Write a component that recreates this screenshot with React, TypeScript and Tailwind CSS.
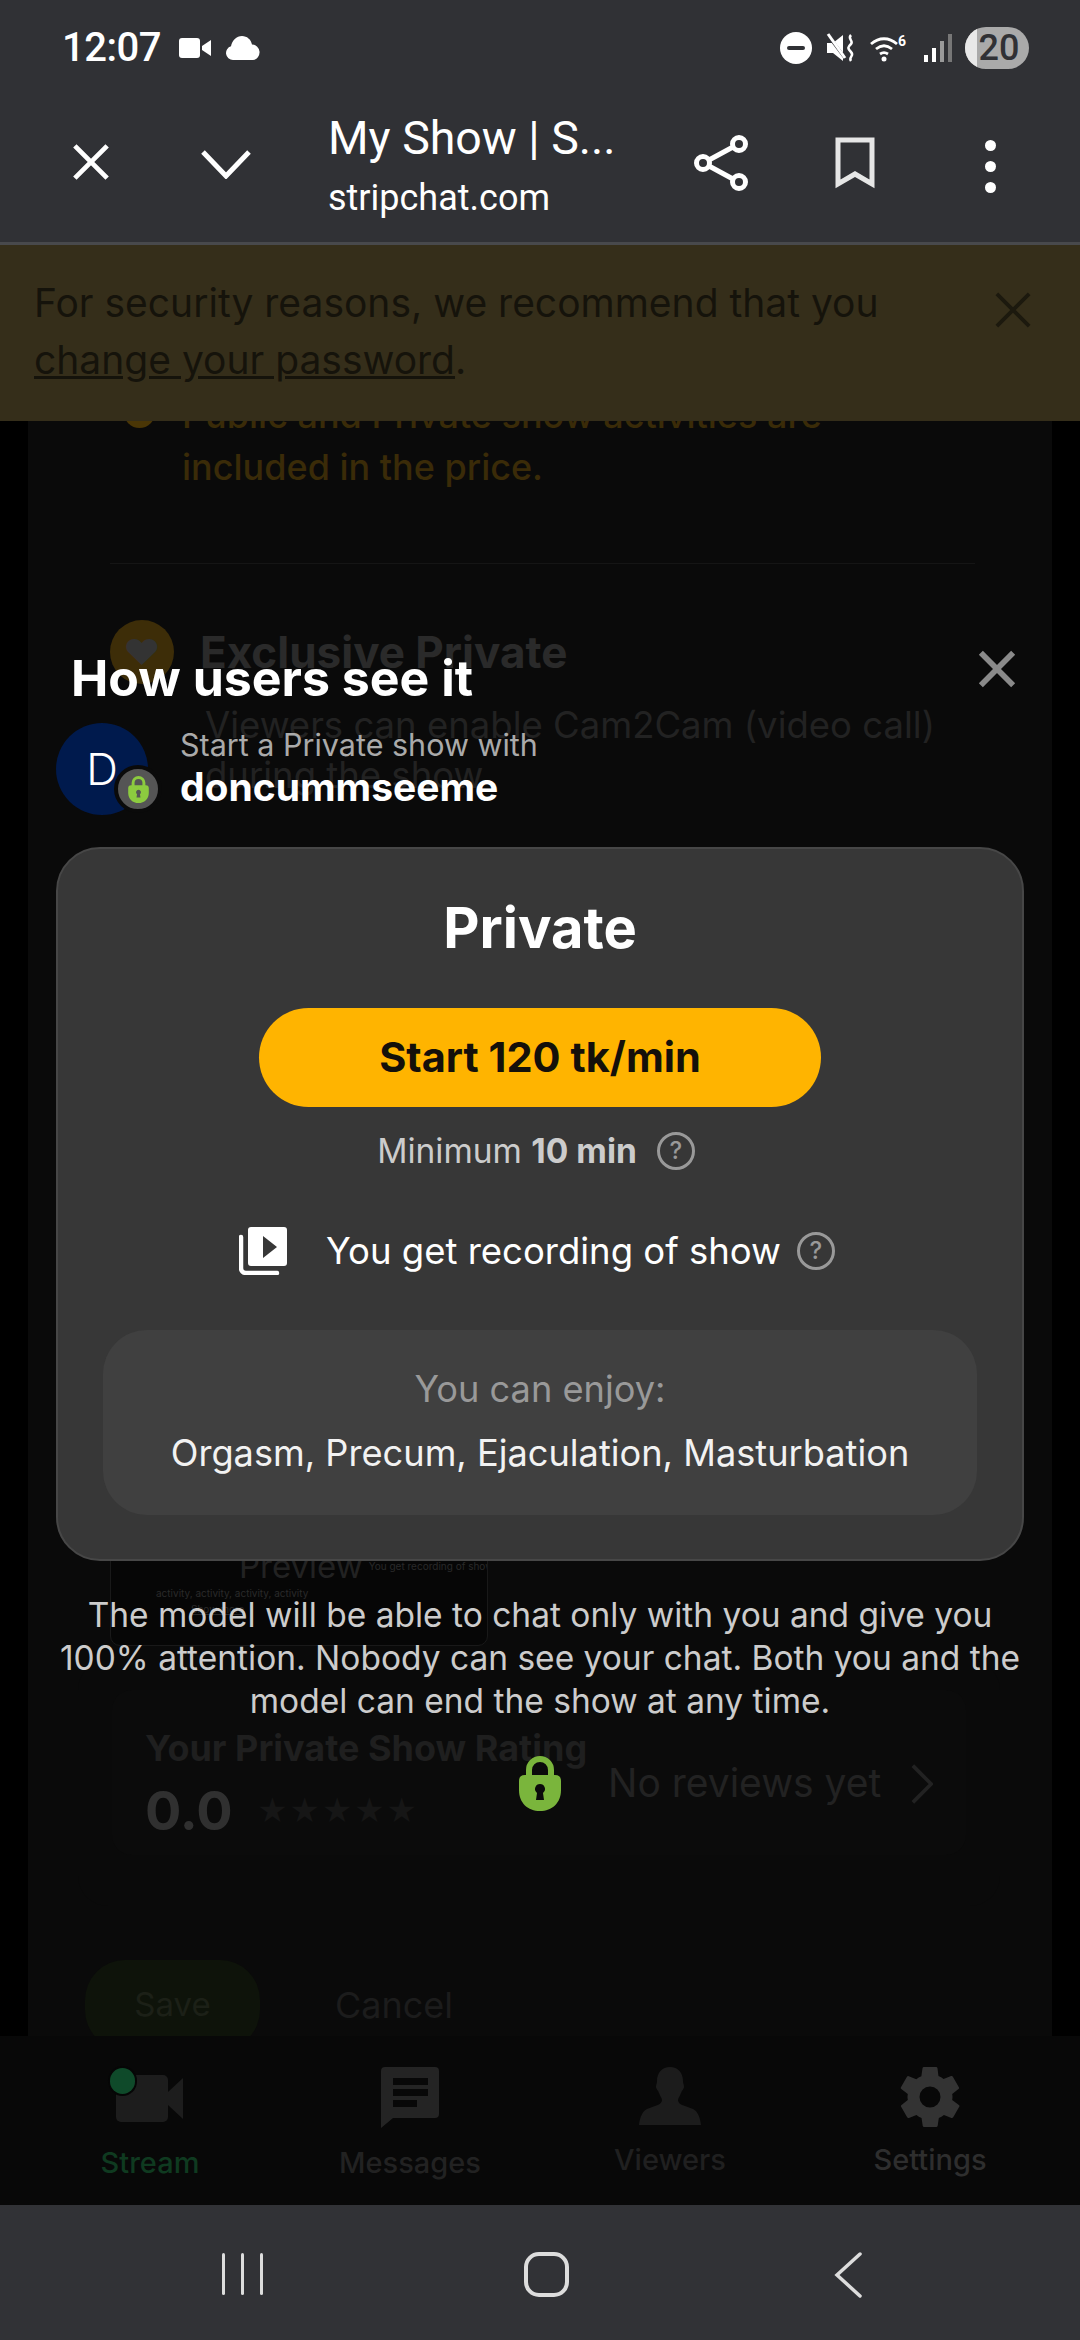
import React from 'react';

const inter = { fontFamily: '"Inter", "Liberation Sans", sans-serif' };
const roboto = { fontFamily: 'Roboto, sans-serif' };

const LockIcon = ({ className }: { className: string }) => (
  <svg viewBox="0 0 42 55" className={className} fill="currentColor">
    <path d="M10 22V14a11 11 0 0 1 22 0v8" fill="none" stroke="currentColor" strokeWidth="6" />
    <path
      fillRule="evenodd"
      d="M6 19h30c4 0 6 2 6 6v9c0 13-9 21-21 21S0 47 0 34v-9c0-4 2-6 6-6zm15 9a5 5 0 0 0-3 9l-1 7h8l-1-7a5 5 0 0 0-3-9z"
    />
  </svg>
);

const HelpCircle = ({ className }: { className: string }) => (
  <span className={`flex items-center justify-center rounded-full border-[3px] border-[#999] text-[#999] font-medium ${className}`}>?</span>
);

const XIcon = ({ className, width = 5 }: { className: string; width?: number }) => (
  <svg viewBox="0 0 40 40" className={className} fill="none" stroke="currentColor" strokeWidth={width}>
    <path d="M3 3l34 34M37 3L3 37" />
  </svg>
);

const StatusBar = () => (
  <div className="h-[96px] pl-[62px] pr-[51px] flex items-center justify-between text-white">
    <div className="flex items-center">
      <span className="text-[40px] font-medium tracking-[-0.5px]" style={roboto}>12:07</span>
      <svg viewBox="0 0 32 22" className="w-[32px] h-[22px] ml-[18px]" fill="currentColor">
        <rect x="0" y="1" width="21" height="20" rx="3" />
        <path d="M23 9l9-6v16l-9-6z" />
      </svg>
      <svg viewBox="0 0 35 24" className="w-[35px] h-[24px] ml-[14px]" fill="currentColor">
        <path d="M8 24a7 7 0 0 1-2-13.700C7 4.500 11.500 0 17 0c5 0 9 3.500 10 8.500A7.800 7.800 0 0 1 28 24z" />
      </svg>
    </div>
    <div className="flex items-center">
      <span className="w-[32px] h-[32px] rounded-full bg-white flex items-center justify-center">
        <span className="w-[18px] h-[4px] bg-[#303135] rounded-full" />
      </span>
      <svg viewBox="0 0 30 30" className="w-[30px] h-[30px] ml-[14px]" fill="none" stroke="white">
        <path d="M1 10h6l10-8v26l-10-8H1z" fill="white" stroke="none" />
        <path d="M1 1l18 24" strokeWidth="3" stroke="#303135" />
        <path d="M2 1l17 24" strokeWidth="3" />
        <path d="M25 2c-4 4 3 6 0 9s-4 4 0 8-3 5 0 9" strokeWidth="2.500" />
      </svg>
      <svg viewBox="0 0 38 28" className="w-[38px] h-[28px] ml-[14px]" fill="none" stroke="white" strokeWidth="2.800">
        <path d="M1 10c8-7 18-7 26 0M6 15c5-4 11-4 16 0M10 20c3-2 5-2 8 0" />
        <circle cx="14" cy="25" r="2.500" fill="white" stroke="none" />
        <text x="28" y="12" fontSize="14" fontWeight="700" fill="white" stroke="none" fontFamily="Roboto, sans-serif">6</text>
      </svg>
      <svg viewBox="0 0 28 28" className="w-[28px] h-[28px] ml-[16px]">
        <rect x="0" y="21" width="4" height="7" fill="white" />
        <rect x="8" y="14" width="4" height="14" fill="white" />
        <rect x="16" y="7" width="4" height="21" fill="#9a9a9a" />
        <rect x="24" y="0" width="4" height="28" fill="#777" />
      </svg>
      <span className="relative w-[64px] h-[42px] ml-[13px] rounded-full bg-[#aaaaaa] overflow-hidden flex items-center justify-center text-[#303135] text-[36px] font-medium" style={roboto}>
        <span className="absolute left-0 top-0 bottom-0 w-[12px] bg-[#e8e8e8]" />
        <span className="relative pl-[4px]">20</span>
      </span>
    </div>
  </div>
);

const Toolbar = () => (
  <div className="h-[149px] flex items-start text-white border-b-[3px] border-[#48494c]" style={roboto}>
    <div className="w-[182px] h-full flex items-center justify-center pb-[15px]">
      <XIcon className="w-[38px] h-[38px]" />
    </div>
    <svg viewBox="0 0 50 30" className="w-[50px] h-[30px] mt-[53px] ml-[19px]" fill="none" stroke="white" strokeWidth="5">
      <path d="M2 3l23 24L48 3" />
    </svg>
    <div className="ml-[77px] w-[340px] pt-[16px]">
      <div className="text-[46.500px] leading-[52px] whitespace-nowrap">My Show | S...</div>
      <div className="text-[36px] leading-[44px] mt-[12px]">stripchat.com</div>
    </div>
    <svg viewBox="0 0 54 56" className="w-[54px] h-[56px] mt-[39px] ml-[26px]" fill="none" stroke="white" strokeWidth="5">
      <circle cx="45" cy="9" r="6.500" />
      <circle cx="9" cy="28" r="6.500" />
      <circle cx="45" cy="47" r="6.500" />
      <path d="M39 12L15 25M15 31l24 13" />
    </svg>
    <svg viewBox="0 0 40 52" className="w-[40px] h-[52px] ml-[87px] mt-[41px]" fill="none" stroke="#e6e6e6" strokeWidth="5">
      <path d="M3 3h34v44L20 37 3 47z" />
    </svg>
    <div className="ml-[110px] mt-[44px] flex flex-col gap-[10px]">
      <span className="w-[11px] h-[11px] rounded-full bg-white" />
      <span className="w-[11px] h-[11px] rounded-full bg-white" />
      <span className="w-[11px] h-[11px] rounded-full bg-white" />
    </div>
  </div>
);

const Banner = () => (
  <div className="h-[176px] bg-[#352e1a] pl-[34px] pt-[29px] flex text-[#15130b] text-[39px] leading-[57px]" style={inter}>
    <div className="w-[960px] whitespace-nowrap">
      For security reasons, we recommend that you
      <br />
      <span className="underline">change your password</span>.
    </div>
    <XIcon className="w-[38px] h-[38px] mt-[17px] text-[#1c190e]" width={4} />
  </div>
);

// the dimmed settings page under the modal
const DimPage = () => (
  <div className="mx-[28px] h-full bg-[#0a0a0a] overflow-hidden" style={inter}>
    <div className="-mt-[32px] pl-[154px] text-[36px] leading-[52px] font-medium text-[#3a2b08]">
      <div className="relative whitespace-nowrap">
        <span className="absolute -left-[58px] top-[8px] w-[31px] h-[31px] rounded-full bg-[#4a3606]" />
        Public and Private show activities are
      </div>
      <div>included in the price.</div>
    </div>
    <div className="ml-[82px] mr-[77px] mt-[70px] h-[1px] bg-[#151515]" />
    <div className="ml-[82px] mt-[56px] flex">
      <span className="w-[64px] h-[64px] rounded-full bg-[#3d2d08] flex items-center justify-center text-[#333] text-[36px]">♥</span>
      <span className="ml-[26px] text-[44px] leading-[64px] font-bold text-[#2a2a2a]">Exclusive Private</span>
    </div>
    <div className="ml-[177px] mt-[16px] text-[36.500px] leading-[50px] text-[#222222] whitespace-nowrap">
      Viewers can enable Cam2Cam (video call)
      <br />
      during the show
    </div>
    <div className="ml-[82px] mt-[646px] w-[378px] h-[200px] border border-[#191919] rounded-[10px] bg-[#060606] overflow-hidden">
      <div className="pl-[128px] pt-[99px] flex items-center text-[33px] leading-[40px] text-[#222222]">
        Preview
        <span className="ml-[6px] text-[10px] leading-[12px] text-[#2a2a2a] whitespace-nowrap">You get recording of show</span>
      </div>
      <div className="pl-[45px] text-[10px] leading-[14px] text-[#2a2a2a] whitespace-nowrap">activity, activity, activity, activity</div>
      <div className="pl-[80px] mt-[2px] text-[10px] leading-[14px] text-[#2a2a2a] underline">Show more</div>
    </div>
    <div className="ml-[50px] mr-[52px] mt-[14px] h-[246px] rounded-[30px] bg-[#0a0a0a] pt-[30px]">
      <div className="mx-[34px] h-[165px] rounded-[20px] bg-[#0b0b0b] pt-[38px] pl-[33px] flex">
        <div className="w-[463px]">
          <div className="text-[36px] leading-[40px] font-bold text-[#1f1f1f] whitespace-nowrap">Your Private Show Rating</div>
          <div className="flex items-center mt-[11px]">
            <span className="text-[54px] leading-[64px] font-bold text-[#303030]">0.0</span>
            <span className="ml-[24px] text-[#161616] text-[30px] tracking-[1px] leading-none">★★★★★</span>
          </div>
        </div>
        <span className="text-[39px] leading-[48px] mt-[31px] text-[#222222] whitespace-nowrap">No reviews yet</span>
        <svg viewBox="0 0 24 44" className="w-[22px] h-[42px] ml-[30px] mt-[35px]" fill="none" stroke="#222" strokeWidth="4">
          <path d="M2 2l20 20L2 42" />
        </svg>
      </div>
    </div>
    <div className="ml-[57px] mt-[54px] flex items-start">
      <span className="w-[175px] h-[90px] rounded-[40px] bg-[#0e130a] flex items-center justify-center text-[33px] text-[#1c2017]">Save</span>
      <span className="ml-[75px] h-[90px] flex items-center text-[36px] text-[#1c1c1c]">Cancel</span>
    </div>
  </div>
);

const TabBar = () => (
  <div className="h-[169px] bg-[#080808] grid grid-cols-4 px-[20px] pt-[31px]" style={inter}>
    <div className="flex flex-col items-center text-[#0f3a20]">
      <div className="relative w-[68px] h-[61px]">
        <svg viewBox="0 0 67 47" className="w-[67px] h-[47px] mt-[8px] text-[#1d1d1d]" fill="currentColor">
          <rect x="0" y="0" width="52" height="47" rx="5" />
          <path d="M52 17L67 3v41L52 30z" />
        </svg>
        <span className="absolute left-[-6px] top-[1px] w-[25px] h-[26px] rounded-full bg-[#0f4a2a] ring-2 ring-[#060606]" />
      </div>
      <span className="text-[29px] leading-[40px] mt-[15px] font-medium">Stream</span>
    </div>
    <div className="flex flex-col items-center text-[#222222]">
      <svg viewBox="0 0 58 61" className="w-[58px] h-[61px] text-[#242424]" fill="currentColor">
        <path fillRule="evenodd" d="M4 0h50a4 4 0 0 1 4 4v43a4 4 0 0 1-4 4H12L0 61V4a4 4 0 0 1 4-4zm8 11v7h35v-7zm0 11v7h35v-7zm0 11v7h24v-7z" />
      </svg>
      <span className="text-[29px] leading-[40px] mt-[15px] font-medium">Messages</span>
    </div>
    <div className="flex flex-col items-center text-[#202020]">
      <svg viewBox="0 0 62 58" className="w-[62px] h-[58px] text-[#1c1c1c]" fill="currentColor">
        <path d="M31 0c8 0 13 6 13 14 0 2 1 4 1 6 0 2-2 3-3 6-1 3-3 5-3 7 0 3 3 5 7 6l8 3c4 2 7 7 8 16H0c1-9 4-14 8-16l8-3c4-1 7-3 7-6 0-2-2-4-3-7-1-3-3-4-3-6 0-2 1-4 1-6C18 6 23 0 31 0z" />
      </svg>
      <span className="text-[29px] leading-[40px] mt-[15px] font-medium">Viewers</span>
    </div>
    <div className="flex flex-col items-center text-[#2e2e2e]">
      <svg viewBox="2 2 20 20" className="w-[60px] h-[60px] text-[#333333]" fill="currentColor">
        <path fillRule="evenodd" d="M19.400 13c.04-.33.1-.66.1-1s-.06-.67-.1-1l2.100-1.650a.5.5 0 0 0 .12-.64l-2-3.460a.5.5 0 0 0-.6-.22l-2.500 1a7.300 7.300 0 0 0-1.700-1L14.500 2.400a.5.5 0 0 0-.5-.4h-4a.5.5 0 0 0-.5.4l-.38 2.650a7.300 7.300 0 0 0-1.700 1l-2.500-1a.5.5 0 0 0-.6.22l-2 3.460a.5.5 0 0 0 .12.64L4.600 11c-.04.33-.1.66-.1 1s.06.67.1 1l-2.100 1.650a.5.5 0 0 0-.12.64l2 3.460c.12.22.38.3.6.22l2.500-1c.52.4 1.080.73 1.700 1l.38 2.650c.04.24.25.4.5.4h4c.25 0 .46-.16.5-.4l.38-2.650a7.300 7.300 0 0 0 1.700-1l2.500 1c.22.08.48 0 .6-.22l2-3.460a.5.5 0 0 0-.12-.64zM12 15.500a3.500 3.500 0 1 1 0-7 3.500 3.500 0 0 1 0 7z" />
      </svg>
      <span className="text-[29px] leading-[40px] mt-[13px] font-medium">Settings</span>
    </div>
  </div>
);

const Modal = () => (
  <div className="absolute inset-0 px-[56px] pt-[228px] flex flex-col" style={inter}>
    <div className="flex items-start justify-between pl-[15px] pr-[8px]">
      <h2 className="text-[50px] leading-[58px] font-bold text-white">How users see it</h2>
      <XIcon className="w-[38px] h-[38px] mt-[1px] text-[#8a8a8a]" width={6} />
    </div>
    <div className="flex items-center mt-[16px]">
      <div className="relative w-[92px] h-[92px] rounded-full bg-[#001a4d] flex items-center justify-center text-white text-[44px] font-light">
        D
        <span className="absolute left-[58px] top-[42px] w-[48px] h-[48px] rounded-full bg-[#555555] border-[4px] border-[#0a0a0a] flex items-center justify-center">
          <LockIcon className="w-[21px] h-[27px] text-[#8ccb3f]" />
        </span>
      </div>
      <div className="ml-[32px] -mt-[6px]">
        <div className="text-[30.500px] leading-[42px] text-[#aaaaaa] whitespace-nowrap">Start a Private show with</div>
        <div className="text-[39px] leading-[42px] font-bold text-white">doncummseeme</div>
      </div>
    </div>

    <div className="mt-[32px] h-[714px] rounded-[44px] bg-[#373737] border-2 border-[#474747] flex flex-col items-center px-[45px] pt-[44px]">
      <div className="text-[56px] leading-[70px] font-bold text-white">Private</div>
      <button type="button" className="mt-[45px] w-[562px] h-[99px] rounded-full bg-[#ffb400] text-[#14100a] text-[41.500px] font-bold">
        Start 120 tk/min
      </button>
      <div className="mt-[23px] mr-[8px] flex items-center text-[33.500px] leading-[42px] text-[#cccccc]">
        <span>Minimum <b className="font-bold">10 min</b></span>
        <HelpCircle className="w-[38px] h-[38px] ml-[20px] text-[24px]" />
      </div>
      <div className="mt-[54px] mr-[6px] flex items-center text-[36.500px] leading-[50px] text-white">
        <svg viewBox="0 0 48 48" className="w-[48px] h-[48px]" fill="white">
          <path fillRule="evenodd" d="M12 0h33a3 3 0 0 1 3 3v33a3 3 0 0 1-3 3H12a3 3 0 0 1-3-3V3a3 3 0 0 1 3-3zm12 9v22l14-11z" />
          <path d="M2 10v31a5 5 0 0 0 5 5h31" fill="none" stroke="white" strokeWidth="4.500" strokeLinecap="round" />
        </svg>
        <span className="ml-[39px]">You get recording of show</span>
        <HelpCircle className="w-[38px] h-[38px] ml-[16px] text-[24px]" />
      </div>
      <div className="mt-[54px] w-[874px] h-[185px] shrink-0 rounded-[44px] bg-[#404040] flex flex-col items-center pt-[36px] text-[36.200px] leading-[46px]">
        <span className="text-[#999999]">You can enjoy:</span>
        <span className="mt-[18px] text-[#f2f2f2] whitespace-nowrap">Orgasm, Precum, Ejaculation, Masturbation</span>
      </div>
    </div>

    <p className="-mx-[30px] mt-[33px] text-center text-[33.500px] leading-[43px] text-[#cccccc] whitespace-nowrap">
      The model will be able to chat only with you and give you
      <br />
      100% attention. Nobody can see your chat. Both you and the
      <br />
      model can end the show at any time.
    </p>
    <LockIcon className="mt-[33px] self-center w-[42px] h-[55px] text-[#7ab53c]" />
  </div>
);

const NavBar = () => (
  <div className="h-[135px] bg-[#313236] flex items-start text-[#dddddd]">
    <div className="ml-[222px] mt-[48px] flex gap-[16px]">
      <span className="w-[3px] h-[42px] rounded bg-[#dddddd]" />
      <span className="w-[3px] h-[42px] rounded bg-[#dddddd]" />
      <span className="w-[3px] h-[42px] rounded bg-[#dddddd]" />
    </div>
    <span className="ml-[261px] mt-[47px] w-[45px] h-[45px] rounded-[15px] border-[4px] border-[#dddddd]" />
    <svg viewBox="0 0 28 46" className="ml-[265px] mt-[47px] w-[28px] h-[46px]" fill="none" stroke="currentColor" strokeWidth="3.500" strokeLinecap="round">
      <path d="M26 2L3 23l23 21" />
    </svg>
  </div>
);

const App: React.FC = () => {
  return (
    <div className="w-[1080px] h-[2340px] flex flex-col bg-black overflow-hidden">
      <div className="bg-[#303135]">
        <StatusBar />
        <Toolbar />
      </div>
      <Banner />
      <main className="relative h-[1615px] overflow-hidden bg-black">
        <DimPage />
        <Modal />
      </main>
      <TabBar />
      <NavBar />
    </div>
  );
};

export default App;
